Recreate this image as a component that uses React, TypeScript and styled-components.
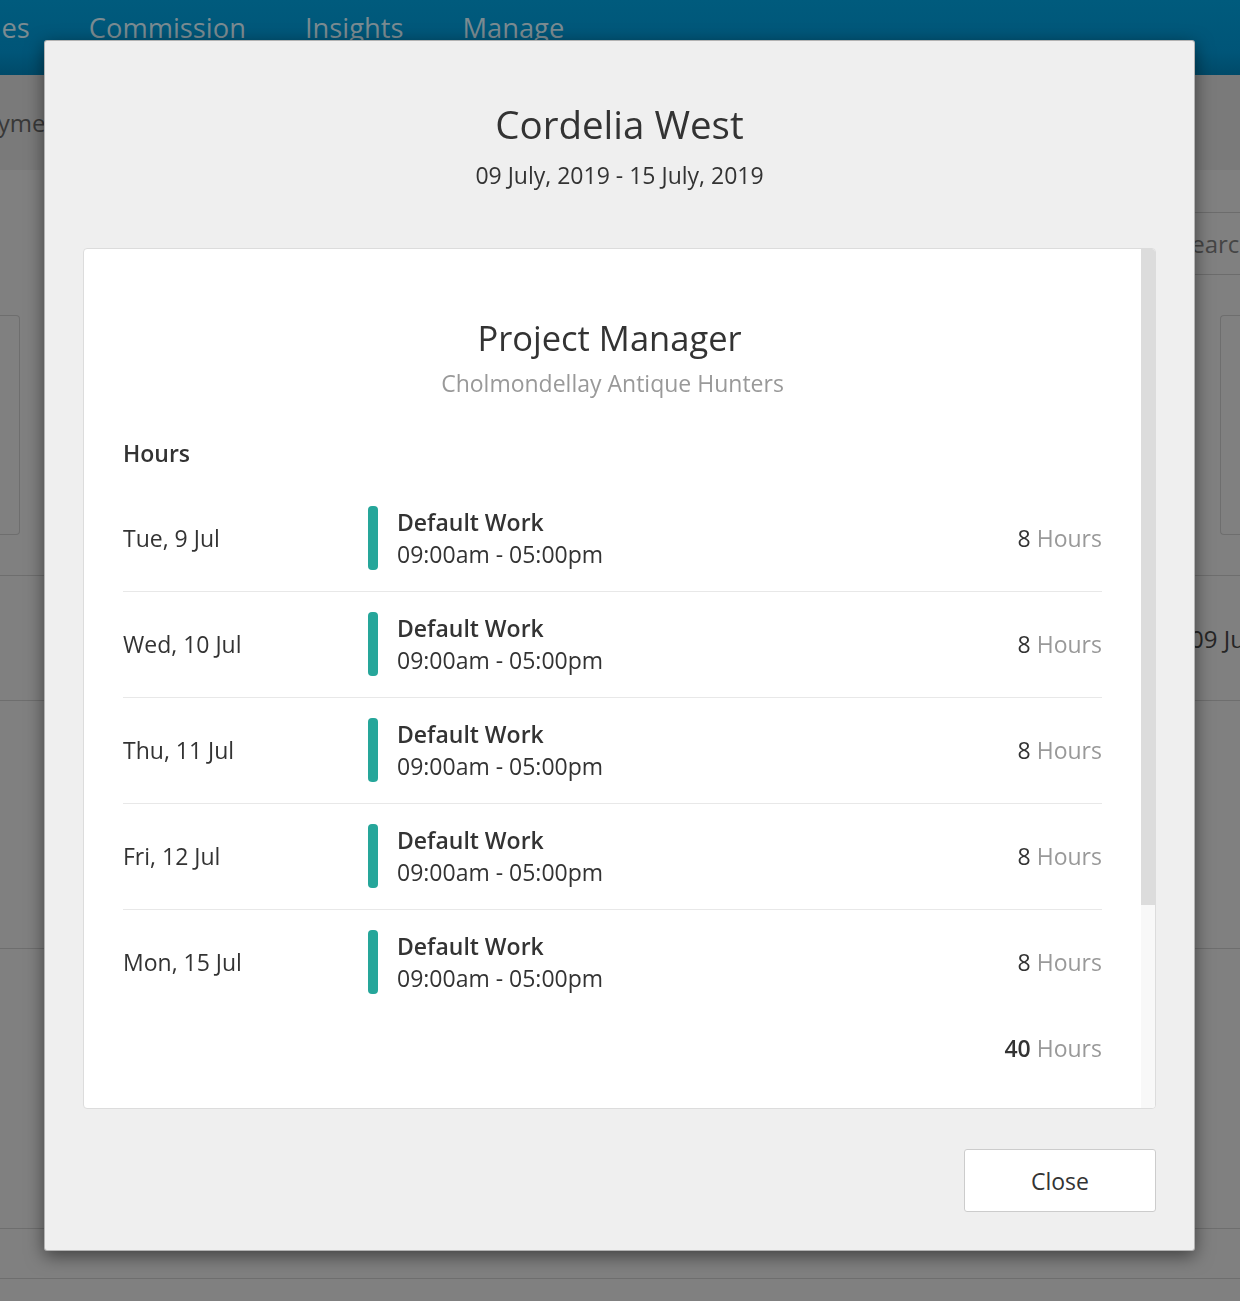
import React from 'react';
import styled, { createGlobalStyle } from 'styled-components';

const GlobalStyle = createGlobalStyle`
  html, body {
    margin: 0;
    padding: 0;
    background: #808080;
    font-family: "Open Sans", "Noto Sans", sans-serif;
    overflow: hidden;
  }
  * { box-sizing: border-box; }
`;

// ---------- dimmed page behind the modal ----------

const Page = styled.div`
  height: 1301px;
  background: #808080;
  overflow: hidden;
`;

const TopBar = styled.div`
  height: 75px;
  background: linear-gradient(#005b7d, #005578 70%, #004a69);
  overflow: hidden;
`;

const Nav = styled.nav`
  display: flex;
  gap: 59px;
  padding-top: 10px;
  margin-left: -99px;
`;

const NavItem = styled.span`
  font-size: 27.3px;
  line-height: 36px;
  color: #7b8b91;
  white-space: nowrap;
`;

const SubBar = styled.div`
  height: 95px;
  background: #7a7a7a;
  display: flex;
  align-items: center;
  overflow: hidden;
`;

const SubTab = styled.span`
  margin-left: -30px;
  font-size: 24px;
  color: #383838;
`;

const Content = styled.div`
  padding-top: 42px;
`;

const Toolbar = styled.div`
  display: flex;
  justify-content: flex-end;
`;

const SearchBox = styled.div`
  width: 80px;
  height: 63px;
  border-top: 1px solid #6c6c6c;
  border-bottom: 1px solid #6c6c6c;
  display: flex;
  align-items: center;
  padding-left: 18px;
  font-size: 24px;
  color: #454545;
  white-space: nowrap;
  overflow: hidden;
`;

const FilterRow = styled.div`
  display: flex;
  justify-content: space-between;
  margin-top: 40px;
  height: 220px;
`;

const FilterCard = styled.div<{ side: 'left' | 'right' }>`
  width: 20px;
  border: 1px solid #6e6e6e;
  ${p =>
    p.side === 'left'
      ? 'border-left: none; border-radius: 0 4px 4px 0;'
      : 'border-right: none; border-radius: 4px 0 0 4px;'}
`;

const Table = styled.div`
  margin-top: 40px;
`;

const TableRow = styled.div<{ h: number }>`
  height: ${p => p.h}px;
  border-top: 1px solid #6e6e6e;
  display: flex;
  justify-content: flex-end;
  align-items: center;
  overflow: hidden;
`;

const TableCell = styled.span`
  width: 50px;
  font-size: 24px;
  color: #262626;
  white-space: nowrap;
`;

// ---------- modal ----------

const Modal = styled.div`
  position: fixed;
  top: 40px;
  left: 44px;
  width: 1151px;
  background: #efefef;
  border: 1px solid rgba(0, 0, 0, 0.25);
  border-radius: 3px;
  box-shadow: 0 5px 18px rgba(0, 0, 0, 0.5);
  padding: 61px 38px 38px;
  display: flex;
  flex-direction: column;
  color: #333;
`;

const Title = styled.h2`
  margin: 0;
  text-align: center;
  font-size: 38.5px;
  line-height: 45px;
  font-weight: 400;
  color: #333;
`;

const Period = styled.div`
  margin-top: 12px;
  text-align: center;
  font-size: 23px;
  line-height: 32px;
  color: #333;
`;

const Card = styled.div`
  margin-top: 57px;
  height: 861px;
  background: #fff;
  border: 1px solid #dcdcdc;
  border-radius: 4px;
  display: flex;
  overflow: hidden;
`;

const CardBody = styled.div`
  flex: 1;
  padding: 68px 39px 0 39px;
`;

const Scrollbar = styled.div`
  width: 14px;
  background: #f8f8f8;
`;

const Thumb = styled.div`
  height: 656px;
  background: #dcdcdc;
`;

const Role = styled.h3`
  margin: 0 6px 0 0;
  text-align: center;
  font-size: 34.5px;
  line-height: 41px;
  font-weight: 400;
  color: #333;
`;

const Company = styled.div`
  margin-top: 9px;
  text-align: center;
  font-size: 23px;
  line-height: 32px;
  color: #999;
`;

const SectionLabel = styled.div`
  margin-top: 38px;
  margin-bottom: 17px;
  font-size: 23px;
  line-height: 32px;
  font-weight: 600;
  color: #333;
`;

const DayList = styled.div``;

const DayRow = styled.div`
  display: flex;
  align-items: center;
  padding: 20px 0 21px;
  border-bottom: 1px solid #e8e8e8;

  &:last-child {
    border-bottom: none;
  }
`;

const DayLabel = styled.div`
  width: 245px;
  font-size: 23px;
  line-height: 32px;
  color: #333;
`;

const Bar = styled.div<{ color: string }>`
  width: 10px;
  height: 64px;
  border-radius: 4px;
  background: ${p => p.color};
  margin-right: 19px;
`;

const Shift = styled.div`
  flex: 1;
  font-size: 23px;
  line-height: 32px;
  color: #333;

  .name {
    font-weight: 600;
  }
`;

const HoursValue = styled.div<{ strong?: boolean }>`
  font-size: 23px;
  line-height: 32px;
  color: #999;
  text-align: right;

  b {
    color: #333;
    font-weight: ${p => (p.strong ? 600 : 400)};
  }
`;

const TotalRow = styled.div`
  display: flex;
  justify-content: flex-end;
  margin-top: 17px;
`;

const Footer = styled.div`
  display: flex;
  justify-content: flex-end;
  margin-top: 40px;
`;

const CloseButton = styled.button`
  width: 192px;
  height: 63px;
  background: #fff;
  border: 1px solid #cccccc;
  border-radius: 3px;
  font-family: inherit;
  font-size: 23px;
  color: #333;
  cursor: pointer;
`;

interface Entry {
  day: string;
  type: string;
  time: string;
  hours: number;
}

const entries: Entry[] = [
  { day: 'Tue, 9 Jul', type: 'Default Work', time: '09:00am - 05:00pm', hours: 8 },
  { day: 'Wed, 10 Jul', type: 'Default Work', time: '09:00am - 05:00pm', hours: 8 },
  { day: 'Thu, 11 Jul', type: 'Default Work', time: '09:00am - 05:00pm', hours: 8 },
  { day: 'Fri, 12 Jul', type: 'Default Work', time: '09:00am - 05:00pm', hours: 8 },
  { day: 'Mon, 15 Jul', type: 'Default Work', time: '09:00am - 05:00pm', hours: 8 },
];

const App: React.FC = () => {
  const total = entries.reduce((sum, e) => sum + e.hours, 0);

  return (
    <>
      <GlobalStyle />
      <Page>
        <TopBar>
          <Nav>
            <NavItem>Schedules</NavItem>
            <NavItem>Commission</NavItem>
            <NavItem>Insights</NavItem>
            <NavItem>Manage</NavItem>
          </Nav>
        </TopBar>
        <SubBar>
          <SubTab>Payments</SubTab>
        </SubBar>
        <Content>
          <Toolbar>
            <SearchBox>Search</SearchBox>
          </Toolbar>
          <FilterRow>
            <FilterCard side="left" />
            <FilterCard side="right" />
          </FilterRow>
          <Table>
            <TableRow h={125}>
              <TableCell>09 July</TableCell>
            </TableRow>
            <TableRow h={248} />
            <TableRow h={280} />
            <TableRow h={50} />
            <TableRow h={30} />
          </Table>
        </Content>

        <Modal>
          <Title>Cordelia West</Title>
          <Period>09 July, 2019 - 15 July, 2019</Period>
          <Card>
            <CardBody>
              <Role>Project Manager</Role>
              <Company>Cholmondellay Antique Hunters</Company>
              <SectionLabel>Hours</SectionLabel>
              <DayList>
                {entries.map(e => (
                  <DayRow key={e.day}>
                    <DayLabel>{e.day}</DayLabel>
                    <Bar color="#26a69a" />
                    <Shift>
                      <div className="name">{e.type}</div>
                      <div>{e.time}</div>
                    </Shift>
                    <HoursValue>
                      <b>{e.hours}</b> Hours
                    </HoursValue>
                  </DayRow>
                ))}
              </DayList>
              <TotalRow>
                <HoursValue strong>
                  <b>{total}</b> Hours
                </HoursValue>
              </TotalRow>
            </CardBody>
            <Scrollbar>
              <Thumb />
            </Scrollbar>
          </Card>
          <Footer>
            <CloseButton>Close</CloseButton>
          </Footer>
        </Modal>
      </Page>
    </>
  );
};

export default App;
